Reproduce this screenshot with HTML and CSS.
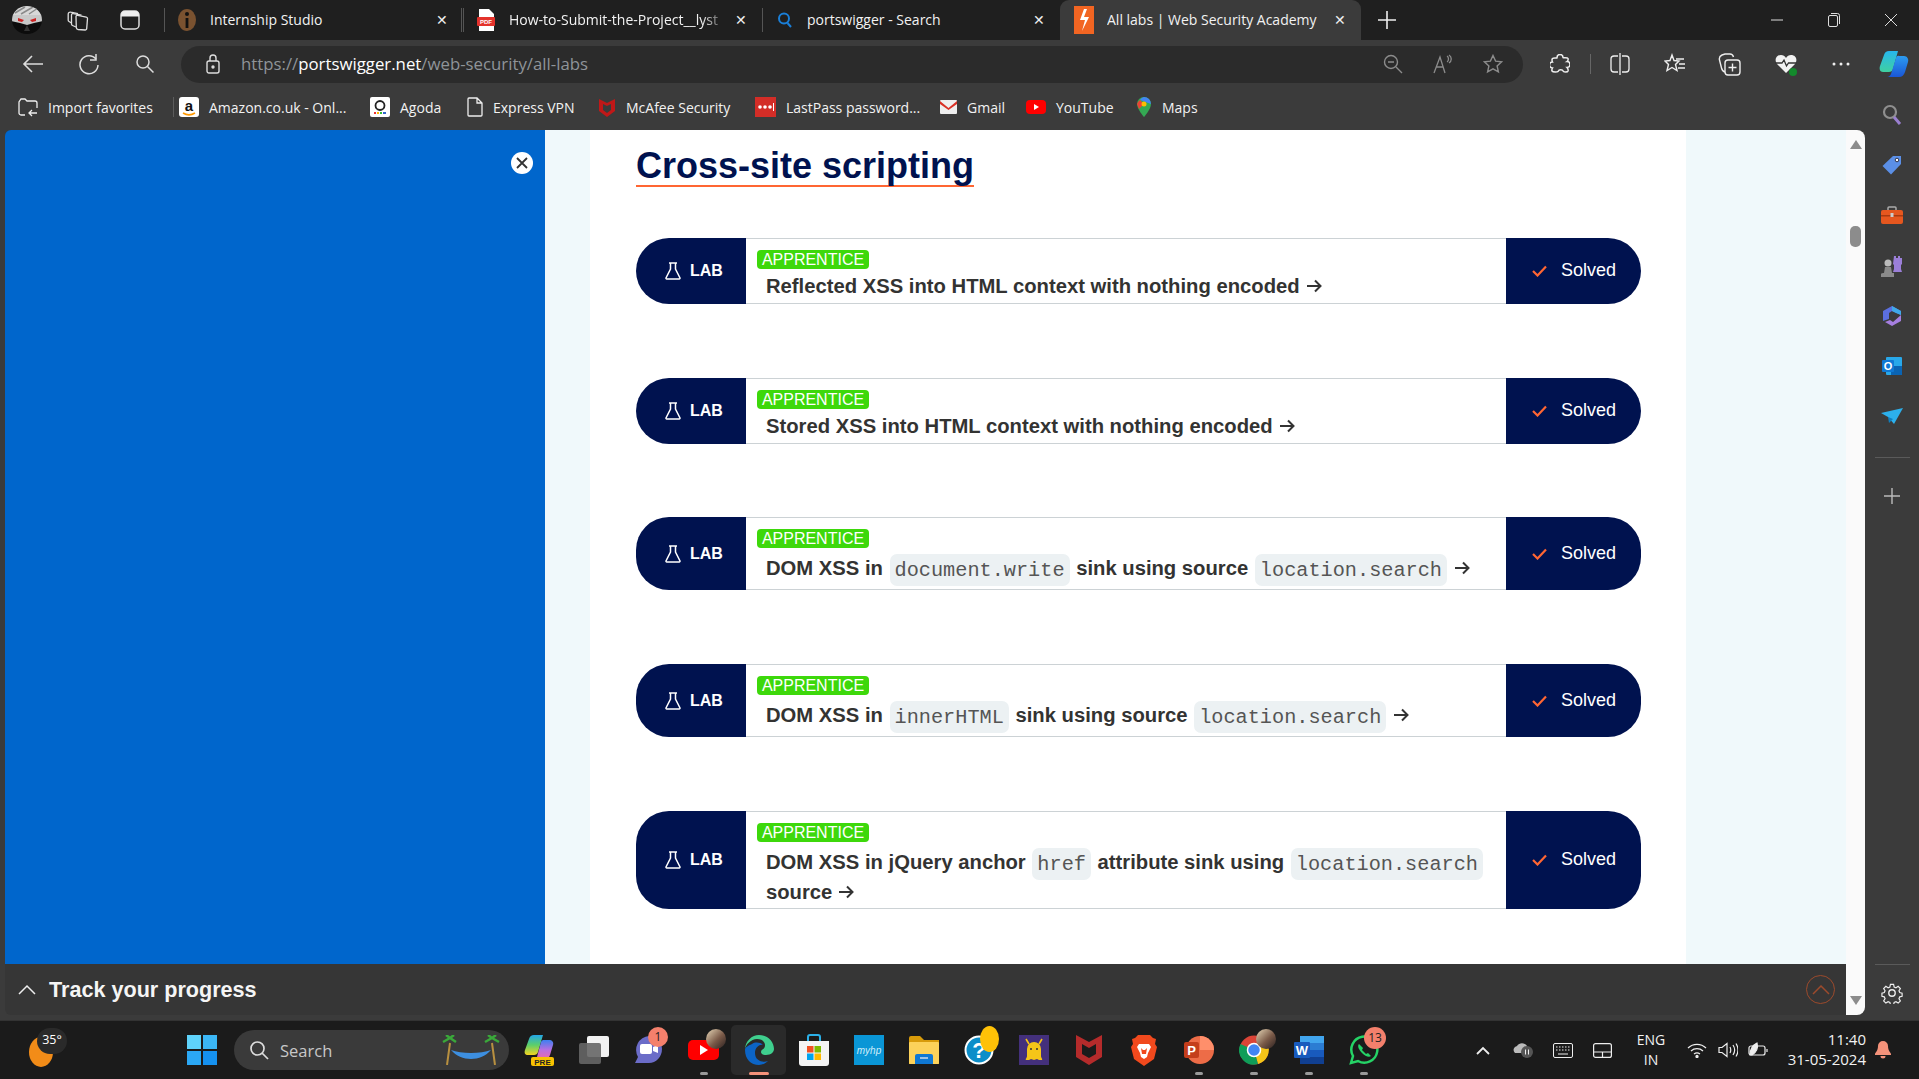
FILE: index.html
```html
<!DOCTYPE html>
<html lang="en">
<head>
  <meta charset="UTF-8">
  <title>All labs | Web Security Academy</title>
  <link rel="stylesheet" href="styles.css">
</head>
<body>
<!-- tab strip -->
<div class="tabstrip">
  <div class="tb"><svg width="32" height="28" viewBox="0 0 32 28"><defs><clipPath id="head"><ellipse cx="16" cy="14" rx="15" ry="14"/></clipPath></defs><g clip-path="url(#head)"><rect width="32" height="28" fill="#0c0c0c"/><rect width="32" height="9" fill="#d8d8d8"/><path d="M4 7L14 1M10 8L22 1M18 8l9-6" stroke="#8a8a8a" stroke-width="1.5"/><path d="M0 9h32v6l-9 2-7 2-7-2-9-2z" fill="#c8c8c8"/><path d="M7 12l6 2-2 2-4-1zM25 12l-6 2 2 2 4-1z" fill="#c22"/><path d="M16 19l-3 6h6z" fill="#333"/></g></svg></div>
  <div class="tb"><svg width="22" height="21" viewBox="0 0 22 21" fill="none" stroke="#ddd" stroke-width="1.3"><path d="M9 6.500a1.500 1.500 0 0 1 1.800-1.200l8.500 1.800a1.500 1.500 0 0 1 1.200 1.500l-.8 10a1.500 1.500 0 0 1-1.600 1.400l-7-.5a2 2 0 0 1-1.800-2z"/><path d="M9 17L5.500 15.500a1.500 1.500 0 0 1-1-1.500V5a1.500 1.500 0 0 1 2-1.400l8 1.600"/><path d="M4.500 13L2 11.500a1.500 1.500 0 0 1-.8-1.500V4a2 2 0 0 1 2.500-1.800l7.300 1.500"/></svg></div>
  <div class="tb"><svg width="20" height="20" viewBox="0 0 20 20"><rect x="1" y="1" width="18" height="18" rx="4" fill="none" stroke="#ddd" stroke-width="1.500"/><path d="M1 5a4 4 0 0 1 4-4h10a4 4 0 0 1 4 4v1.500H1z" fill="#eee"/></svg></div>
  <div class="tab-sep-box"><span class="tab-sep"></span></div>
  <div class="tab tab-first">
    <svg class="fav" width="20" height="24" viewBox="0 0 20 24"><ellipse cx="10" cy="12" rx="9" ry="11" fill="#7a5230"/><circle cx="10" cy="6" r="2" fill="#111"/><rect x="8.600" y="10" width="2.800" height="10" fill="#111"/></svg>
    <span class="tab-title">Internship Studio</span><span class="tab-x">✕</span>
  </div>
  <div class="tab tab-mid">
    <svg class="fav" width="20" height="24" viewBox="0 0 20 24"><path d="M3 1h10l5 5v17H3z" fill="#fff"/><rect x="1" y="9" width="18" height="9" rx="1" fill="#e3322b"/><text x="10" y="16" class="svg-mini" text-anchor="middle" fill="#fff">PDF</text></svg>
    <span class="tab-title tab-fade">How-to-Submit-the-Project__lyst</span><span class="tab-x">✕</span>
  </div>
  <div class="tab tab-mid tab-search">
    <svg class="fav" width="18" height="18" viewBox="0 0 18 18" fill="none" stroke="#1a7fd8" stroke-width="2"><circle cx="8" cy="7.500" r="5"/><path d="M11.500 12l3.500 4"/></svg>
    <span class="tab-title">portswigger - Search</span><span class="tab-x">✕</span>
  </div>
  <div class="tab tab-active">
    <svg class="fav" width="20" height="28" viewBox="0 0 20 28"><rect width="20" height="28" fill="#f26522"/><path d="M10 3L6 14h5l-3 11 7-14h-5l3-8z" fill="#fff"/></svg>
    <span class="tab-title">All labs | Web Security Academy</span><span class="tab-x">✕</span>
  </div>
  <div class="tb"><svg width="20" height="20" viewBox="0 0 20 20" stroke="#eee" stroke-width="1.600"><path d="M10 1v18M1 10h18"/></svg></div>
  <div></div>
  <div class="tb"><svg width="14" height="14" viewBox="0 0 14 14" stroke="#ddd"><path d="M1 7h12"/></svg></div>
  <div class="tb"><svg width="14" height="16" viewBox="0 0 14 16" fill="none" stroke="#ddd"><rect x="1.500" y="3.500" width="9" height="11" rx="1.500"/><path d="M4 1.500h6.500a2 2 0 0 1 2 2V12"/></svg></div>
  <div class="tb"><svg width="14" height="14" viewBox="0 0 14 14" stroke="#ddd"><path d="M1 1l12 12M13 1L1 13"/></svg></div>
</div>

<!-- address bar -->
<div class="toolbar">
  <div class="tb"><svg width="22" height="20" viewBox="0 0 22 20" fill="none" stroke="#ddd" stroke-width="1.600"><path d="M21 10H2M10 2l-8 8 8 8"/></svg></div>
  <div class="tb"><svg width="22" height="22" viewBox="0 0 22 22" fill="none" stroke="#ddd" stroke-width="1.500"><path d="M18 6a9 9 0 1 0 2 6"/><path d="M18 1v6h-6"/></svg></div>
  <div class="tb"><svg width="20" height="20" viewBox="0 0 20 20" fill="none" stroke="#ddd" stroke-width="1.500"><circle cx="8" cy="8" r="6"/><path d="M12.500 12.500l6 6"/></svg></div>
  <div class="urlbar">
    <svg class="lock" width="14" height="20" viewBox="0 0 14 20" fill="none" stroke="#ddd" stroke-width="1.400"><rect x="1" y="7" width="12" height="12" rx="2"/><path d="M4 7V4a3 3 0 0 1 6 0v3"/><circle cx="7" cy="13" r="1" fill="#ddd"/></svg>
    <span class="url"><span class="url-dim">https://</span>portswigger.net<span class="url-dim">/web-security/all-labs</span></span>
    <div class="url-icons">
      <svg width="20" height="20" viewBox="0 0 20 20" fill="none" stroke="#8c8c8c" stroke-width="1.400"><circle cx="8" cy="8" r="6.500"/><path d="M5 8h6M13 13l6 6"/></svg>
      <svg width="20" height="20" viewBox="0 0 20 20" fill="none" stroke="#8c8c8c" stroke-width="1.300"><path d="M1 19L7 3l5 16M3 13h7M14 2c2 1 2 5 0 6M16 1c3 2 3 6 0 8"/></svg>
      <svg width="20" height="20" viewBox="0 0 20 20" fill="none" stroke="#8c8c8c" stroke-width="1.400"><path d="M10 1.500l2.600 5.600 6 .7-4.500 4.100 1.300 6-5.400-3-5.400 3 1.300-6L1.400 7.800l6-.7z"/></svg>
    </div>
  </div>
  <div class="tb"><svg width="20" height="21" viewBox="0 0 20 21" fill="none" stroke="#eee" stroke-width="1.500"><path d="M7 3.500a3 3 0 0 1 6 0c0 .7 4.500-.5 5 1 .5 2-1 3-1 3a3 3 0 0 1 0 6s1.500 1.500 1 3.500c-.5 1.500-4 1-4.500.5a3 3 0 0 0-5.500 0c-.5.5-5 1-6-.5-.5-1 .5-3 .5-3a3 3 0 0 1 0-6s-1-2 0-3.500c1-1 4.500-.3 4.500-.5z"/></svg></div>
  <div class="tb-sep"></div>
  <div class="tb"><svg width="20" height="22" viewBox="0 0 20 22" fill="none" stroke="#eee" stroke-width="1.300"><path d="M8 3H4a3 3 0 0 0-3 3v10a3 3 0 0 0 3 3h4M12 3h4a3 3 0 0 1 3 3v10a3 3 0 0 1-3 3h-4M10 0v22"/></svg></div>
  <div class="tb"><svg width="22" height="22" viewBox="0 0 22 22" fill="none" stroke="#eee" stroke-width="1.400"><path d="M8 2l2 5.500 5 .5-3.500 3.500 1.500 6-5-3-5 3 1.500-6L1 8l5-.5z"/><path d="M12 6h8M15 11h6M14 15h7"/></svg></div>
  <div class="tb"><svg width="24" height="24" viewBox="0 0 24 24" fill="none" stroke="#eee" stroke-width="1.400"><path d="M7 20c-2-.5-3-2-3.500-4L1.500 8c-.5-2 .5-4 2.500-5l3-1h5c2 0 3 1 3.500 3"/><rect x="7" y="8" width="15" height="15" rx="3"/><path d="M14.500 11.500v8M10.500 15.500h8"/></svg></div>
  <div class="tb"><svg width="24" height="24" viewBox="0 0 24 24"><path d="M12 21L3 12C0 8 2 3 7 3c2 0 4 1 5 3 1-2 3-3 5-3 5 0 7 5 4 9z" fill="#f2f2f2"/><path d="M1 11h7l2-3 2.500 6 2-3h8" fill="none" stroke="#333" stroke-width="1.300"/><circle cx="19" cy="20" r="4" fill="#138a2c"/></svg></div>
  <div class="tb"><svg width="18" height="4" viewBox="0 0 18 4" fill="#eee"><circle cx="2" cy="2" r="1.500"/><circle cx="9" cy="2" r="1.500"/><circle cx="16" cy="2" r="1.500"/></svg></div>
  <div class="tb"><svg width="30" height="28" viewBox="0 0 30 28"><defs><linearGradient id="cpa" x1="0" y1="0" x2="0" y2="1"><stop offset="0" stop-color="#27b7ee"/><stop offset="1" stop-color="#3fd0a0"/></linearGradient><linearGradient id="cpb" x1="0" y1="0" x2="0" y2="1"><stop offset="0" stop-color="#2c9cf0"/><stop offset="1" stop-color="#1a56d6"/></linearGradient></defs><path d="M10 1h9l-5 18c-.5 2-2 3-4 3H4c-3 0-4-3-3-6l4-11c.8-2.500 2.500-4 5-4z" fill="url(#cpa)"/><path d="M16 27h-8c2 0 3.500-1.500 4-3l5-16c.5-1.500 1.500-2.500 3-2h5c3 0 5 3 4 6l-3 10c-1 3-3 5-6 5z" fill="url(#cpb)"/></svg></div>
</div>

<div class="lower">
  <div class="lower-main">
    <!-- favorites bar -->
    <div class="favbar">
      <div class="fav-item"><svg width="20" height="20" viewBox="0 0 20 20" fill="none" stroke="#eee" stroke-width="1.300"><path d="M7 18H3a2 2 0 0 1-2-2V5l2-3h4l2 2h8a2 2 0 0 1 2 2v5M11 16h8M14 13l-3 3 3 3"/></svg>Import favorites</div>
      <div class="fav-sep-box"><span class="fav-sep"></span></div>
      <div class="fav-item"><svg width="20" height="20" viewBox="0 0 20 20"><rect width="20" height="20" rx="3" fill="#fff"/><text x="10" y="14" class="svg-a" text-anchor="middle" fill="#111">a</text><path d="M4 16c4 2.500 8 2.500 12 0" fill="none" stroke="#f90" stroke-width="1.500"/></svg>Amazon.co.uk - Onl...</div>
      <div class="fav-item"><svg width="20" height="20" viewBox="0 0 20 20"><rect width="20" height="20" rx="2" fill="#fff"/><circle cx="10" cy="8.500" r="4.500" fill="none" stroke="#222" stroke-width="1.800"/><path d="M4 16h2" stroke="#e33" stroke-width="2"/><path d="M7 16h2" stroke="#fb0" stroke-width="2"/><path d="M10 16h2" stroke="#3b3" stroke-width="2"/><path d="M13 16h3" stroke="#36c" stroke-width="2"/></svg>Agoda</div>
      <div class="fav-item"><svg width="16" height="20" viewBox="0 0 16 20" fill="none" stroke="#eee" stroke-width="1.300"><path d="M2 1h8l5 5v12a1 1 0 0 1-1 1H2a1 1 0 0 1-1-1V2a1 1 0 0 1 1-1zM10 1v5h5"/></svg>Express VPN</div>
      <div class="fav-item"><svg width="18" height="20" viewBox="0 0 18 20"><path d="M1 2l8 4 8-4v12l-8 6-8-6z" fill="#c01818"/><path d="M5 7l4 2 4-2v6l-4 3-4-3z" fill="#3b3b3b"/></svg>McAfee Security</div>
      <div class="fav-item"><svg width="21" height="20" viewBox="0 0 21 20"><rect width="21" height="20" fill="#d32d27"/><circle cx="5" cy="10" r="1.800" fill="#fff"/><circle cx="10" cy="10" r="1.800" fill="#fff"/><circle cx="15" cy="10" r="1.800" fill="#fff"/><path d="M18.500 6v8" stroke="#fff"/></svg>LastPass password...</div>
      <div class="fav-item"><svg width="17" height="14" viewBox="0 0 17 14"><rect width="17" height="14" rx="1" fill="#eee"/><path d="M0 1l8.500 7L17 1v3l-8.500 6L0 4z" fill="#d93025"/></svg>Gmail</div>
      <div class="fav-item"><svg width="20" height="14" viewBox="0 0 20 14"><rect width="20" height="14" rx="4" fill="#f00"/><path d="M8 4l5 3-5 3z" fill="#fff"/></svg>YouTube</div>
      <div class="fav-item"><svg width="16" height="20" viewBox="0 0 16 20"><path d="M8 0a7 7 0 0 1 7 7c0 5-7 13-7 13S1 12 1 7a7 7 0 0 1 7-7z" fill="#34a853"/><path d="M8 0a7 7 0 0 1 7 7L4 3a7 7 0 0 1 4-3z" fill="#4285f4"/><path d="M1 7a7 7 0 0 1 3-4l4 4-5 5z" fill="#ea4335"/><circle cx="8" cy="7" r="2.500" fill="#fbbc04"/></svg>Maps</div>
    </div>

    <!-- page -->
    <div class="viewport">
      <div class="viewport-top">
        <div class="side-panel">
          <span class="panel-close"><svg width="12" height="12" viewBox="0 0 12 12" stroke="#333" stroke-width="1.800"><path d="M1 1l10 10M11 1L1 11"/></svg></span>
        </div>
        <div class="page-bg">
          <div class="content">
            <h1 class="section-title">Cross-site scripting</h1>

            <div class="lab-row">
              <div class="lab-tag"><svg class="flask" width="16" height="18" viewBox="0 0 16 18" fill="none" stroke="#fff" stroke-width="1.500"><path d="M4 1h8M5.500 1v6L1 16a.8.8 0 0 0 .7 1h12.600a.8.8 0 0 0 .7-1L10.500 7V1"/></svg>LAB</div>
              <div class="lab-body">
                <span class="level">APPRENTICE</span>
                <div class="lab-title">Reflected XSS into HTML context with nothing encoded<svg class="arrow" width="15" height="14" viewBox="0 0 15 14" fill="none" stroke="#333" stroke-width="2"><path d="M0 7h13M8 1.500L13.500 7 8 12.500"/></svg></div>
              </div>
              <div class="lab-status"><svg class="check" width="15" height="12" viewBox="0 0 15 12" fill="none" stroke="#ff6633" stroke-width="2.200"><path d="M1 6l4.500 4.500L14 1.500"/></svg><span class="solved">Solved</span></div>
            </div>

            <div class="lab-row">
              <div class="lab-tag"><svg class="flask" width="16" height="18" viewBox="0 0 16 18" fill="none" stroke="#fff" stroke-width="1.500"><path d="M4 1h8M5.500 1v6L1 16a.8.8 0 0 0 .7 1h12.600a.8.8 0 0 0 .7-1L10.500 7V1"/></svg>LAB</div>
              <div class="lab-body">
                <span class="level">APPRENTICE</span>
                <div class="lab-title">Stored XSS into HTML context with nothing encoded<svg class="arrow" width="15" height="14" viewBox="0 0 15 14" fill="none" stroke="#333" stroke-width="2"><path d="M0 7h13M8 1.500L13.500 7 8 12.500"/></svg></div>
              </div>
              <div class="lab-status"><svg class="check" width="15" height="12" viewBox="0 0 15 12" fill="none" stroke="#ff6633" stroke-width="2.200"><path d="M1 6l4.500 4.500L14 1.500"/></svg><span class="solved">Solved</span></div>
            </div>

            <div class="lab-row">
              <div class="lab-tag"><svg class="flask" width="16" height="18" viewBox="0 0 16 18" fill="none" stroke="#fff" stroke-width="1.500"><path d="M4 1h8M5.500 1v6L1 16a.8.8 0 0 0 .7 1h12.600a.8.8 0 0 0 .7-1L10.500 7V1"/></svg>LAB</div>
              <div class="lab-body">
                <span class="level">APPRENTICE</span>
                <div class="lab-title">DOM XSS in <code>document.write</code> sink using source <code>location.search</code><svg class="arrow" width="15" height="14" viewBox="0 0 15 14" fill="none" stroke="#333" stroke-width="2"><path d="M0 7h13M8 1.500L13.500 7 8 12.500"/></svg></div>
              </div>
              <div class="lab-status"><svg class="check" width="15" height="12" viewBox="0 0 15 12" fill="none" stroke="#ff6633" stroke-width="2.200"><path d="M1 6l4.500 4.500L14 1.500"/></svg><span class="solved">Solved</span></div>
            </div>

            <div class="lab-row">
              <div class="lab-tag"><svg class="flask" width="16" height="18" viewBox="0 0 16 18" fill="none" stroke="#fff" stroke-width="1.500"><path d="M4 1h8M5.500 1v6L1 16a.8.8 0 0 0 .7 1h12.600a.8.8 0 0 0 .7-1L10.500 7V1"/></svg>LAB</div>
              <div class="lab-body">
                <span class="level">APPRENTICE</span>
                <div class="lab-title">DOM XSS in <code>innerHTML</code> sink using source <code>location.search</code><svg class="arrow" width="15" height="14" viewBox="0 0 15 14" fill="none" stroke="#333" stroke-width="2"><path d="M0 7h13M8 1.500L13.500 7 8 12.500"/></svg></div>
              </div>
              <div class="lab-status"><svg class="check" width="15" height="12" viewBox="0 0 15 12" fill="none" stroke="#ff6633" stroke-width="2.200"><path d="M1 6l4.500 4.500L14 1.500"/></svg><span class="solved">Solved</span></div>
            </div>

            <div class="lab-row">
              <div class="lab-tag"><svg class="flask" width="16" height="18" viewBox="0 0 16 18" fill="none" stroke="#fff" stroke-width="1.500"><path d="M4 1h8M5.500 1v6L1 16a.8.8 0 0 0 .7 1h12.600a.8.8 0 0 0 .7-1L10.500 7V1"/></svg>LAB</div>
              <div class="lab-body">
                <span class="level">APPRENTICE</span>
                <div class="lab-title">DOM XSS in jQuery anchor <code>href</code> attribute sink using <code>location.search</code> source<svg class="arrow" width="15" height="14" viewBox="0 0 15 14" fill="none" stroke="#333" stroke-width="2"><path d="M0 7h13M8 1.500L13.500 7 8 12.500"/></svg></div>
              </div>
              <div class="lab-status"><svg class="check" width="15" height="12" viewBox="0 0 15 12" fill="none" stroke="#ff6633" stroke-width="2.200"><path d="M1 6l4.500 4.500L14 1.500"/></svg><span class="solved">Solved</span></div>
            </div>
          </div>
        </div>
        <div class="scrollbar-top">
          <span class="sb-up"></span>
          <span class="sb-thumb"></span>
        </div>
      </div>
      <div class="viewport-bottom">
        <div class="progress-bar">
          <svg width="18" height="11" viewBox="0 0 18 11" fill="none" stroke="#eee" stroke-width="1.500"><path d="M1 10l8-8 8 8"/></svg>
          <span class="progress-text">Track your progress</span>
          <span class="back-top"><svg width="18" height="10" viewBox="0 0 18 10" fill="none" stroke="#9c4a2c" stroke-width="1.500"><path d="M1 9l8-8 8 8"/></svg></span>
        </div>
        <div class="scrollbar-bottom"><span class="sb-down"></span></div>
      </div>
    </div>
  </div>

  <!-- edge sidebar -->
  <div class="sidebar">
    <div class="side-item"><svg width="20" height="22" viewBox="0 0 20 22"><circle cx="8" cy="8" r="6" fill="none" stroke="#8f8f8f" stroke-width="2.200"/><path d="M12 13l6 7" stroke="#9a7fd0" stroke-width="3"/></svg></div>
    <div class="side-item"><svg width="20" height="20" viewBox="0 0 20 20"><path d="M11 1h8v8L9 19.500.5 11z" fill="#5b8fe6"/><circle cx="15" cy="5" r="1.800" fill="#fff" stroke="#334"/></svg></div>
    <div class="side-item"><svg width="22" height="18" viewBox="0 0 22 18"><path d="M7 4V2a1 1 0 0 1 1-1h6a1 1 0 0 1 1 1v2" fill="none" stroke="#aaa" stroke-width="1.500"/><rect y="4" width="22" height="14" rx="2" fill="#e5571f"/><rect y="9" width="22" height="1.500" fill="#a83a10"/><rect x="9.500" y="7" width="3" height="4" fill="#ccc"/></svg></div>
    <div class="side-item"><svg width="22" height="22" viewBox="0 0 22 22"><path d="M13 1h2v2h2V1h2v2h2V1v8l-1 1v4l1 3h-9l1-3v-4l-1-1z" fill="#9b7fd8"/><circle cx="7" cy="8" r="3.500" fill="#bbb"/><path d="M4 12h6l1 6h2v4H0v-3c0-1 2-1 3-1z" fill="#8a8a8a"/></svg></div>
    <div class="side-item"><svg width="20" height="22" viewBox="0 0 20 22"><path d="M10 1l9 5v4l-9-4-3 2v6L1 16V6z" fill="#5b6fe0"/><path d="M19 10v6l-9 5-7-4 5-2 3 2 8-7z" fill="#a67fe0"/><path d="M10 1l9 5v4l-5-2-4-2z" fill="#3fa9e8"/></svg></div>
    <div class="side-item"><svg width="20" height="20" viewBox="0 0 20 20"><rect x="4" y="1" width="16" height="18" rx="1" fill="#28a8ea"/><rect x="9" y="10" width="11" height="9" fill="#0a64b4"/><rect y="4" width="12" height="12" rx="1" fill="#0f78d4"/><text x="6" y="13.500" class="svg-o" text-anchor="middle" fill="#fff">O</text></svg></div>
    <div class="side-item"><svg width="22" height="16" viewBox="0 0 22 16"><path d="M0 5L22 0 13 16 7 9z" fill="#2cb0ec"/><path d="M7 9l1 6 4-4z" fill="#0e7fc0"/></svg></div>
    <div class="side-line"></div>
    <div class="side-plus"><svg width="16" height="16" viewBox="0 0 16 16" stroke="#bbb" stroke-width="1.400"><path d="M8 0v16M0 8h16"/></svg></div>
    <div class="side-line side-line-low"></div>
    <div class="side-gear"><svg width="22" height="22" viewBox="0 0 24 24" fill="none" stroke="#eee" stroke-width="1.500"><circle cx="12" cy="12" r="3.500"/><path d="M10 1.500h4l.7 3.200 2.300 1 2.800-1.800 2.800 2.800-1.800 2.800 1 2.300 3 .7v4l-3 .7-1 2.300 1.800 2.800-2.800 2.800-2.800-1.800-2.300 1-.7 3h-4l-.7-3-2.300-1-2.800 1.800-2.800-2.800 1.800-2.800-1-2.300-3-.7v-4l3-.7 1-2.300-1.800-2.800 2.800-2.800 2.800 1.800 2.300-1z" transform="translate(1.700 1.400) scale(.86)"/></svg></div>
  </div>
</div>

<!-- windows taskbar -->
<div class="taskbar">
  <div class="weather"><svg width="24" height="34" viewBox="0 0 24 34"><ellipse cx="12" cy="19" rx="12" ry="15" fill="#f28c18"/></svg><span class="temp">35°</span></div>
  <div class="start"><svg width="30" height="30" viewBox="0 0 30 30"><rect width="14" height="14" fill="#5fd3fb"/><rect x="16" width="14" height="14" fill="#3bb7f6"/><rect y="16" width="14" height="14" fill="#2ba8f5"/><rect x="16" y="16" width="14" height="14" fill="#1591f0"/></svg></div>
  <div class="search-pill">
    <svg width="20" height="20" viewBox="0 0 20 20" fill="none" stroke="#ddd" stroke-width="1.700"><circle cx="8.500" cy="8.500" r="6.500"/><path d="M13 13l6 6"/></svg>
    <span class="search-text">Search</span>
    <svg class="hammock" width="58" height="30" viewBox="0 0 58 30"><path d="M8 8l-3 22M50 8l3 22" stroke="#b89040" stroke-width="2"/><path d="M8 3L1 7M8 3l6 4M8 3L4 0M8 3l4-3M50 3l-7 4M50 3l7 4M50 3l-4-3M50 3l4-3" stroke="#3aa83a" stroke-width="2.500"/><path d="M9 15c10 12 30 12 40 0-10 4-30 4-40 0z" fill="#3d8fe0"/></svg>
  </div>
  <div class="task-icons">
    <div class="task"><svg width="30" height="32" viewBox="0 0 30 32"><defs><linearGradient id="cpl" x1="0" y1="0" x2="0" y2="1"><stop offset="0" stop-color="#23a6e8"/><stop offset=".5" stop-color="#5ccf6a"/><stop offset="1" stop-color="#f5d420"/></linearGradient><linearGradient id="cpr" x1="0" y1="0" x2="0" y2="1"><stop offset="0" stop-color="#3d7ff0"/><stop offset=".5" stop-color="#b96fe0"/><stop offset="1" stop-color="#f06aa0"/></linearGradient></defs><path d="M10 1h9l-5 17c-.5 2-2 3-4 3H4c-3 0-4-2-3-5l4-11c.8-2.500 2.500-4 5-4z" fill="url(#cpl)"/><path d="M16 26H9c2 0 3-1.500 4-3l4-15c.5-1.500 1.500-2 3-2h5c3 0 5 2 4 5l-3 10c-1 3-3 5-6 5z" fill="url(#cpr)"/><rect x="7" y="23" width="23" height="9" rx="2" fill="#f9c200"/><text x="18.500" y="30.500" class="svg-pre" text-anchor="middle" fill="#222">PRE</text></svg></div>
    <div class="task"><svg width="30" height="28" viewBox="0 0 30 28"><rect x="8" width="22" height="21" rx="2" fill="#f2f2f2"/><rect y="7" width="22" height="21" rx="2" fill="#666" opacity=".9"/></svg></div>
    <div class="task"><svg width="30" height="32" viewBox="0 0 30 32"><path d="M15 2a13 13 0 0 1 13 13c0 8-6 14-13 14H1l3-6A14 14 0 0 1 15 2z" fill="#6b6cc8"/><rect x="6" y="10" width="12" height="10" rx="2" fill="#fff"/><path d="M19 13l5-2v8l-5-2z" fill="#fff"/></svg><span class="count">1</span></div>
    <div class="task task-run"><svg width="32" height="26" viewBox="0 0 32 26"><rect y="3" width="31" height="20" rx="5" fill="#f00"/><path d="M12 8l8 5-8 5z" fill="#fff"/></svg><span class="avatar"></span></div>
    <div class="task task-on"><svg width="32" height="32" viewBox="0 0 32 32"><path d="M2 16C2 7 9 1 16 1c9 0 15 7 15 14 0 3-3 6-8 6-3 0-5-1-5-3 0-3 4-2 4-7 0-3-3-6-8-6C8 5 2 11 2 16z" fill="#3fcf8e"/><path d="M2 16c0 9 6 15 14 15 4 0 7-2 9-4-5 2-13 0-13-8 0-6 5-9 8-8-3-3-8-3-11-1-4 2-7 3-7 6z" fill="#0c64c5"/></svg></div>
    <div class="task"><svg width="30" height="34" viewBox="0 0 30 34"><path d="M9 9V4a2 2 0 0 1 2-2h8a2 2 0 0 1 2 2v5" fill="none" stroke="#2bb0e8" stroke-width="2"/><path d="M0 8h30v22a3 3 0 0 1-3 3H3a3 3 0 0 1-3-3z" fill="#f4f4f4"/><rect x="8" y="13" width="6.500" height="6.500" fill="#f25022"/><rect x="15.500" y="13" width="6.500" height="6.500" fill="#7fba00"/><rect x="8" y="20.500" width="6.500" height="6.500" fill="#00a4ef"/><rect x="15.500" y="20.500" width="6.500" height="6.500" fill="#ffb900"/></svg></div>
    <div class="task"><svg width="30" height="30" viewBox="0 0 30 30"><rect width="30" height="30" fill="#0a96d6"/><text x="15" y="19" class="svg-hp" text-anchor="middle" fill="#cfeefa">myhp</text></svg></div>
    <div class="task"><svg width="30" height="28" viewBox="0 0 30 28"><path d="M0 2a2 2 0 0 1 2-2h9l4 4h15v24H0z" fill="#d89b0a"/><rect y="6" width="30" height="22" rx="1" fill="#fcd25a"/><path d="M6 28v-8a2 2 0 0 1 2-2h14a2 2 0 0 1 2 2v8z" fill="#0f78d4"/><path d="M11 22h8" stroke="#cde" stroke-width="1.500"/></svg></div>
    <div class="task"><svg width="30" height="30" viewBox="0 0 30 30"><circle cx="15" cy="15" r="13.500" fill="#0c8ec9" stroke="#fff" stroke-width="2"/><text x="15" y="23" class="svg-help" text-anchor="middle" fill="#fff">?</text></svg><span class="dot"></span></div>
    <div class="task"><svg width="30" height="30" viewBox="0 0 30 30"><rect width="30" height="30" fill="#44307c"/><path d="M7 4l3 5M23 4l-3 5" stroke="#f5c518" stroke-width="1.600"/><path d="M8 14a7 7 0 0 1 14 0v7c0 2 2 3 1 4h-3l-2-1-3 1-3-1-2 1H7c-1-1 1-2 1-4z" fill="#f5c518"/><circle cx="12" cy="14" r="1" fill="#333"/><circle cx="18" cy="14" r="1" fill="#333"/></svg></div>
    <div class="task"><svg width="28" height="32" viewBox="0 0 28 32"><path d="M1 1l13 7 13-7v22L14 31 1 23z" fill="#b52b2b"/><path d="M7 10l7 4 7-4v10l-7 4-7-4z" fill="#1b1b1b"/></svg></div>
    <div class="task"><svg width="26" height="32" viewBox="0 0 26 32"><path d="M7 1h12l3 3 3 1-1 5 2 3-3 12-10 7-10-7L0 13l2-3-1-5 3-1z" fill="#f1491d"/><path d="M8 10h10l2 3-3 6-1 4-3 2-3-2-1-4-3-6z" fill="#fff"/><path d="M10 14l2 2h2l2-2-1 6h-4z" fill="#f1491d"/></svg></div>
    <div class="task task-run"><svg width="30" height="30" viewBox="0 0 30 30"><circle cx="16" cy="15" r="14" fill="#ed6c47"/><path d="M16 1a14 14 0 0 1 14 14H16z" fill="#ff8f6b"/><rect y="7" width="15" height="16" rx="2" fill="#c43e1c"/><text x="7.500" y="20" class="svg-letter" text-anchor="middle" fill="#fff">P</text></svg></div>
    <div class="task task-run"><svg width="30" height="30" viewBox="0 0 30 30"><circle cx="15" cy="15" r="14.500" fill="#db4437"/><path d="M15 15L28 8a14.500 14.500 0 0 1-9 21z" fill="#f5c518"/><path d="M15 15l4 14A14.500 14.500 0 0 1 1.500 9z" fill="#0f9d58"/><circle cx="15" cy="15" r="6.500" fill="#4285f4" stroke="#fff" stroke-width="1.500"/></svg><span class="avatar"></span></div>
    <div class="task task-run"><svg width="30" height="30" viewBox="0 0 30 30"><rect x="6" y="1" width="24" height="28" rx="1" fill="#2b7cd3"/><rect x="6" y="1" width="24" height="7" fill="#41a5ee"/><rect x="6" y="15" width="24" height="7" fill="#185abd"/><rect x="6" y="22" width="24" height="7" fill="#103f91"/><rect y="7" width="16" height="16" rx="1" fill="#185abd"/><text x="8" y="20" class="svg-letter" text-anchor="middle" fill="#fff">W</text></svg></div>
    <div class="task task-run"><svg width="30" height="30" viewBox="0 0 30 30" fill="none"><path d="M2 28l2-7A13 13 0 1 1 9 26z" stroke="#25d366" stroke-width="2.500"/><path d="M10 9c-2 2 0 6 3 9s7 5 9 3l-3-3-2 1-4-4 1-2z" fill="#25d366"/></svg><span class="count count-wide">13</span></div>
  </div>
  <div class="tray">
    <div class="tb"><svg width="14" height="9" viewBox="0 0 14 9" fill="none" stroke="#eee" stroke-width="1.800"><path d="M1 8l6-6 6 6"/></svg></div>
    <div class="tb"><svg width="22" height="18" viewBox="0 0 22 18"><path d="M3 12a4 4 0 0 1 2-7 6 6 0 0 1 10 0v7z" fill="#bbb"/><circle cx="15" cy="11" r="6" fill="#555"/><path d="M13.500 8.500v5M16.500 8.500v5" stroke="#eee"/></svg></div>
    <div class="tb"><svg width="20" height="15" viewBox="0 0 20 15" fill="none" stroke="#eee"><rect x=".5" y=".5" width="19" height="14" rx="1.500"/><path d="M3 4h14M3 7h14" stroke-dasharray="1.500 1.500"/><path d="M5 11h10"/></svg></div>
    <div class="tb"><svg width="19" height="15" viewBox="0 0 19 15" fill="none" stroke="#eee" stroke-width="1.200"><rect x=".6" y=".6" width="17.800" height="13.800" rx="2"/><path d="M.6 9h17.800M9.500 9v5.400"/></svg></div>
    <div class="lang">ENG<br>IN</div>
    <div class="tb"><svg width="20" height="15" viewBox="0 0 20 15" fill="none" stroke="#eee" stroke-width="1.300"><path d="M1 5a13 13 0 0 1 18 0M4 8a9 9 0 0 1 12 0M7 11a5 5 0 0 1 6 0"/><circle cx="10" cy="13.500" r="1" fill="#eee"/></svg></div>
    <div class="tb"><svg width="20" height="16" viewBox="0 0 20 16" fill="none" stroke="#eee" stroke-width="1.200"><path d="M1 5.500h3L9 1.500v13l-5-4H1zM12 5c1 2 1 4 0 6M15 3c2 3 2 7 0 10M18 1.500c2.500 4 2.500 9 0 13"/></svg></div>
    <div class="tb"><svg width="20" height="16" viewBox="0 0 20 16" fill="none" stroke="#eee" stroke-width="1.200"><rect x="1" y="4" width="16" height="9" rx="2"/><path d="M19 7v3"/><path d="M2 13c0-6 3-10 7-12 1 4 0 9-5 12z" fill="#eee"/></svg></div>
    <div class="clock">11:40<br>31-05-2024</div>
    <div class="tb"><svg width="16" height="18" viewBox="0 0 16 18" fill="#f4927a"><path d="M8 0a5 5 0 0 1 5 5c0 5 3 7 3 8v1H0v-1c0-1 3-3 3-8a5 5 0 0 1 5-5zM5.500 15h5a2.500 2.500 0 0 1-5 0z"/></svg></div>
  </div>
</div>
</body>
</html>
```

FILE: styles.css
```css
* {
  box-sizing: border-box;
}

html,
body {
  margin: 0;
  padding: 0;
}

body {
  width: 1919px;
  height: 1079px;
  overflow: hidden;
  display: flex;
  flex-direction: column;
  background: #3b3b3b;
  color: #fff;
  font-family: "Open Sans", "Liberation Sans", sans-serif;
  font-size: 14px;
}

.tb {
  display: flex;
  align-items: center;
  justify-content: center;
}

/* tab strip */
.tabstrip {
  height: 40px;
  flex: none;
  background: #1f1f1f;
  display: grid;
  grid-template-columns: 54px 48px 56px 12px 293px 299px 298px 301px 52px 1fr 56px 58px 56px;
  align-items: center;
}

.tab-sep-box {
  display: flex;
  justify-content: center;
}

.tab-sep {
  width: 1px;
  height: 24px;
  background: #555;
}

.tab {
  height: 40px;
  display: flex;
  align-items: center;
  padding-right: 13px;
  border-right: 1px solid transparent;
  position: relative;
}

.tab-first {
  padding-left: 7px;
}

.tab-mid {
  padding-left: 13px;
}

.tab-search {
  padding-left: 14px;
}

.tab-mid:before,
.tab-first:after {
  content: "";
  position: absolute;
  top: 8px;
  width: 1px;
  height: 24px;
  background: #555;
}

.tab-mid:before {
  left: 0;
}

.tab-first:after {
  right: 0;
}

.tab-active {
  background: #3b3b3b;
  border-radius: 9px 9px 0 0;
  padding-left: 14px;
}

.fav {
  flex: none;
  margin-right: 13px;
}

.tab-title {
  flex: 1;
  overflow: hidden;
  white-space: nowrap;
  margin-bottom: 2px;
  color: #f2f2f2;
}

.tab-fade {
  -webkit-mask-image: linear-gradient(to right, #000 88%, transparent);
  mask-image: linear-gradient(to right, #000 88%, transparent);
}

.tab-x {
  flex: none;
  width: 14px;
  margin-left: 6px;
  font-size: 14px;
  line-height: 14px;
  text-align: center;
  color: #eee;
}

/* address bar */
.toolbar {
  height: 48px;
  flex: none;
  background: #3b3b3b;
  display: grid;
  grid-template-columns: 60px 52px 60px 1357px 56px 4px 56px 54px 56px 56px 54px 1fr;
  align-items: center;
  padding-left: 3px;
}

.urlbar {
  height: 37px;
  margin-left: 6px;
  background: #2b2b2b;
  border-radius: 19px;
  display: flex;
  align-items: center;
  padding-left: 25px;
  margin-right: 9px;
}

.lock {
  flex: none;
}

.url {
  margin-left: 21px;
  margin-bottom: 2px;
  font-size: 16.8px;
  color: #fff;
  flex: 1;
}

.url-dim {
  color: #8f9499;
}

.url-icons {
  display: flex;
  gap: 30px;
  margin-right: 20px;
}

.tb-sep {
  width: 1px;
  height: 20px;
  background: #666;
  justify-self: center;
}

/* lower part: favorites + page, sidebar */
.lower {
  height: 932px;
  flex: none;
  display: flex;
}

.lower-main {
  width: 1865px;
  flex: none;
  display: flex;
  flex-direction: column;
}

.favbar {
  height: 42px;
  flex: none;
  display: grid;
  grid-template-columns: 149px 12px 191px 97px 131px 157px 185px 86px 110px 1fr;
  align-items: center;
  padding-left: 18px;
  padding-bottom: 4px;
}

.fav-item {
  display: flex;
  align-items: center;
  gap: 10px;
  white-space: nowrap;
  color: #f2f2f2;
}

.fav-sep-box {
  display: flex;
  justify-content: center;
}

.fav-sep {
  width: 1px;
  height: 20px;
  background: #5c5c5c;
}

/* page */
.viewport {
  flex: 1;
  margin-left: 5px;
  border-radius: 6px 8px 8px 6px;
  overflow: hidden;
  display: flex;
  flex-direction: column;
  margin-bottom: 5px;
}

.viewport-top {
  height: 834px;
  flex: none;
  display: flex;
}

.side-panel {
  width: 540px;
  flex: none;
  background: #0066cc;
  position: relative;
}

.panel-close {
  position: absolute;
  top: 22px;
  right: 12px;
  width: 22px;
  height: 22px;
  border-radius: 50%;
  background: #fff;
  display: flex;
  align-items: center;
  justify-content: center;
}

.page-bg {
  flex: 1;
  background: #f0f9fb;
  padding: 0 160px 0 45px;
}

.content {
  height: 100%;
  background: #fff;
  padding: 16px 45px 0 46px;
  overflow: hidden;
}

.section-title {
  display: inline-block;
  margin: 0 0 51px;
  font-family: "Liberation Sans", Arial, sans-serif;
  font-size: 36px;
  line-height: 39px;
  font-weight: bold;
  color: #00124f;
  border-bottom: 2px solid #ff6633;
}

.lab-row {
  display: flex;
  margin-bottom: 73.7px;
  font-family: "Liberation Sans", Arial, sans-serif;
}

.lab-tag {
  width: 110px;
  flex: none;
  background: #00124f;
  border-radius: 33px 0 0 33px;
  display: flex;
  align-items: center;
  padding-left: 29px;
  font-size: 16px;
  font-weight: bold;
  color: #fff;
}

.flask {
  margin-right: 9px;
}

.lab-body {
  flex: 1;
  border-top: 1px solid #ccd2d5;
  border-bottom: 1px solid #ccd2d5;
  padding: 11px 8px 3px 11px;
  min-width: 0;
}

.level {
  display: block;
  width: 112px;
  height: 19px;
  border-radius: 4px;
  background: #3dd80b;
  color: #fff;
  font-size: 16px;
  line-height: 19px;
  text-align: center;
}

.lab-title {
  margin-top: 5px;
  min-height: 26px;
  padding-left: 9px;
  font-size: 20.24px;
  line-height: 25px;
  font-weight: bold;
  color: #333332;
}

.lab-title code {
  display: inline-block;
  vertical-align: middle;
  height: 32px;
  padding: 0 5px;
  margin: 1px 1px 0;
  border-radius: 7px;
  background: #ecf1f3;
  color: #555;
  font-family: "Liberation Mono", monospace;
  font-size: 20.24px;
  font-weight: normal;
  line-height: 33px;
}

.arrow {
  margin-left: 7px;
}

.lab-status {
  width: 135px;
  flex: none;
  background: #00124f;
  border-radius: 0 33px 33px 0;
  display: flex;
  align-items: center;
  padding-left: 26px;
  font-size: 18px;
  color: #fff;
}

.check {
  margin-right: 14px;
}

.solved {
  margin-bottom: 1px;
}

.scrollbar-top {
  width: 19px;
  flex: none;
  background: #fafafa;
  display: flex;
  flex-direction: column;
  align-items: center;
  padding-top: 10px;
}

.sb-up {
  width: 0;
  height: 0;
  border-left: 6px solid transparent;
  border-right: 6px solid transparent;
  border-bottom: 9px solid #8c8c8c;
}

.sb-thumb {
  width: 11px;
  height: 21px;
  margin-top: 77px;
  border-radius: 5px;
  background: #8c8c8c;
}

.viewport-bottom {
  flex: 1;
  display: flex;
}

.progress-bar {
  flex: 1;
  background: #363636;
  display: flex;
  align-items: center;
  padding: 0 11px 0 13px;
}

.progress-text {
  margin-left: 13px;
  font-family: "Liberation Sans", Arial, sans-serif;
  font-size: 21.6px;
  font-weight: bold;
  color: #f5f5f5;
}

.back-top {
  margin-left: auto;
  width: 29px;
  height: 29px;
  border: 1.5px solid #9c4a2c;
  border-radius: 50%;
  display: flex;
  align-items: center;
  justify-content: center;
}

.scrollbar-bottom {
  width: 19px;
  flex: none;
  background: #fafafa;
  display: flex;
  justify-content: center;
  padding-top: 32px;
}

.sb-down {
  width: 0;
  height: 0;
  border-left: 6px solid transparent;
  border-right: 6px solid transparent;
  border-top: 9px solid #8c8c8c;
}

/* sidebar */
.sidebar {
  width: 54px;
  flex: none;
  display: flex;
  flex-direction: column;
  align-items: center;
  padding-top: 2px;
}

.side-item {
  height: 50.2px;
  flex: none;
  display: flex;
  align-items: center;
  justify-content: center;
}

.side-line {
  width: 35px;
  height: 1px;
  background: #5a5a5a;
  margin-top: 16px;
  flex: none;
}

.side-plus {
  margin-top: 30px;
  flex: none;
  display: flex;
}

.side-line-low {
  margin-top: 460px;
}

.side-gear {
  margin-top: 17px;
  flex: none;
  display: flex;
}

/* taskbar */
.taskbar {
  flex: 1;
  background: #1b1b1b;
  display: flex;
  align-items: center;
  border-top: 1px solid #333;
}

.weather {
  width: 175px;
  flex: none;
  padding-left: 29px;
  position: relative;
  display: flex;
}

.temp {
  position: absolute;
  left: 37px;
  top: -5px;
  width: 30px;
  height: 26px;
  border-radius: 13px;
  background: #2a2a2a;
  font-size: 12.5px;
  line-height: 24px;
  text-align: center;
}

.start {
  width: 59px;
  flex: none;
  display: flex;
  padding-left: 12px;
}

.search-pill {
  width: 275px;
  height: 40px;
  flex: none;
  border-radius: 20px;
  background: #3a3a3a;
  display: flex;
  align-items: center;
  padding-left: 15px;
}

.search-text {
  margin-left: 11px;
  font-size: 16.5px;
  color: #c8c8c8;
}

.hammock {
  margin-left: auto;
  margin-right: 9px;
}

.task-icons {
  margin-left: 2px;
  display: flex;
}

.task {
  width: 55px;
  height: 50px;
  flex: none;
  display: flex;
  align-items: center;
  justify-content: center;
  position: relative;
}

.task-run:after,
.task-on:after {
  content: "";
  position: absolute;
  bottom: 0;
  left: 50%;
  width: 8px;
  height: 3px;
  margin-left: -4px;
  border-radius: 2px;
  background: #9a9a9a;
}

.task-on {
  background: #2a2a2a;
  border-radius: 5px;
}

.task-on:after {
  width: 20px;
  margin-left: -10px;
  background: #f4927a;
}

.count {
  position: absolute;
  top: 2px;
  right: 8px;
  width: 20px;
  height: 20px;
  border-radius: 50%;
  background: #f4806c;
  color: #222;
  font-size: 12px;
  line-height: 20px;
  text-align: center;
}

.count-wide {
  width: 22px;
  height: 22px;
  right: 5px;
  line-height: 22px;
}

.dot {
  position: absolute;
  top: 1px;
  right: 7px;
  width: 19px;
  height: 26px;
  border-radius: 50%;
  background: #ffc107;
}

.avatar {
  position: absolute;
  top: 4px;
  right: 5px;
  width: 20px;
  height: 20px;
  border-radius: 50%;
  background: linear-gradient(135deg, #e8d8b8, #7a5a48 55%, #2a2020);
}

.tray {
  margin-left: auto;
  width: 456px;
  flex: none;
  display: grid;
  grid-template-columns: 40px 40px 40px 39px 58px 33px 30px 29px 94px 1fr;
  align-items: center;
  padding-right: 19px;
}

.lang {
  font-size: 14px;
  line-height: 20px;
  text-align: center;
  color: #f2f2f2;
}

.clock {
  padding-bottom: 2px;
  font-size: 15px;
  line-height: 20px;
  text-align: right;
  white-space: nowrap;
  color: #f2f2f2;
}

.svg-mini {
  font-family: "Liberation Sans", sans-serif;
  font-size: 6px;
  font-weight: bold;
}

.svg-a {
  font-family: "Liberation Sans", sans-serif;
  font-size: 15px;
  font-weight: bold;
}

.svg-o {
  font-family: "Liberation Sans", sans-serif;
  font-size: 11px;
  font-weight: bold;
}

.svg-pre {
  font-family: "Liberation Sans", sans-serif;
  font-size: 8px;
  font-weight: bold;
}

.svg-hp {
  font-family: "Liberation Sans", sans-serif;
  font-size: 10px;
  font-style: italic;
}

.svg-help {
  font-family: "Liberation Sans", sans-serif;
  font-size: 22px;
  font-weight: bold;
}

.svg-letter {
  font-family: "Liberation Sans", sans-serif;
  font-size: 13px;
  font-weight: bold;
}
```
